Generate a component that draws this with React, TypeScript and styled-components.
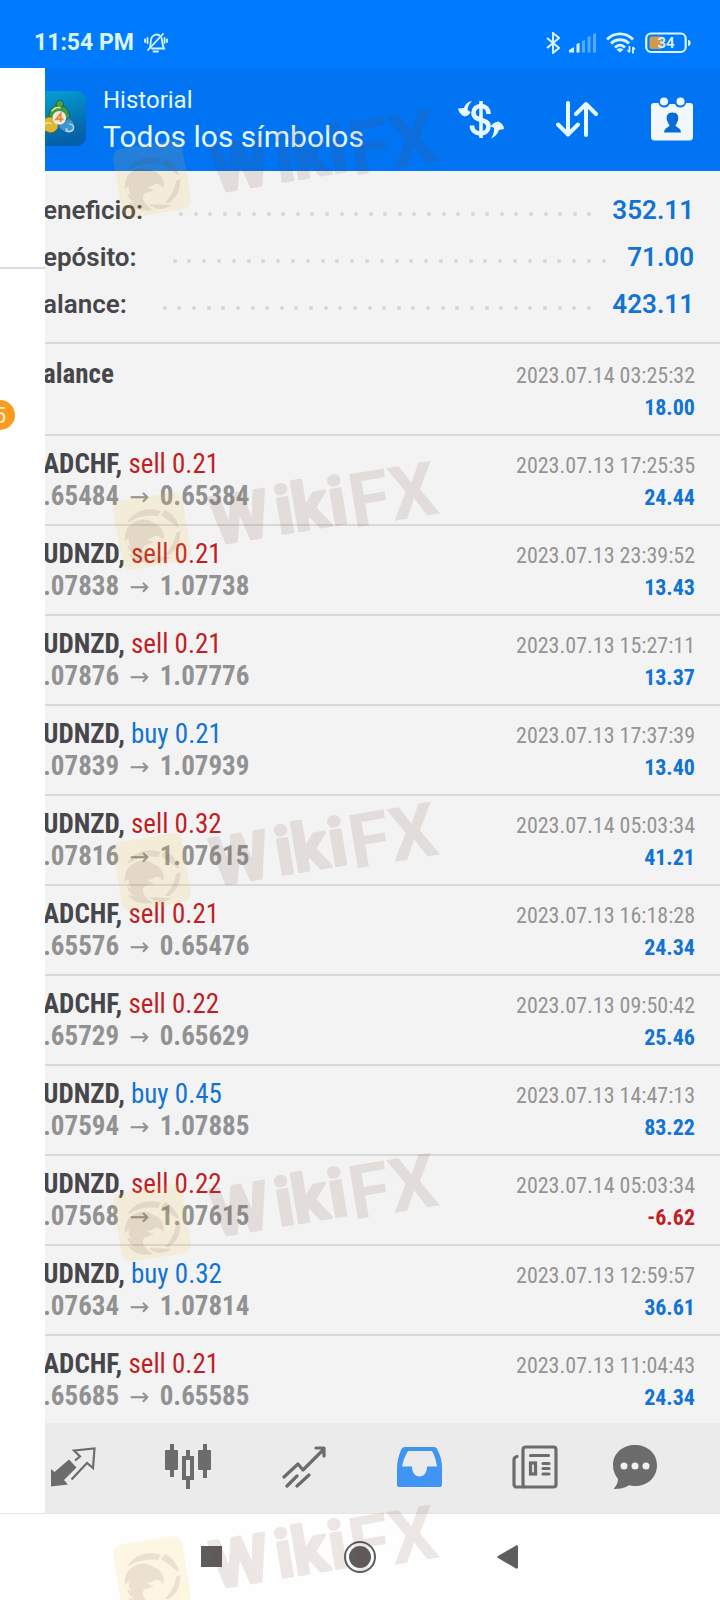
import React from 'react';
import styled, { createGlobalStyle } from 'styled-components';

const BLUE = '#1273d4';
const RED = '#c11e24';
const STATUS_INK = '#d9f5ff';
const TAB_INK = '#6c6c6c';

const GlobalStyle = createGlobalStyle`
  * { box-sizing: border-box; }
  body { margin: 0; background: #fefefe; }
  button { border: 0; padding: 0; background: none; color: inherit; font: inherit; }
  svg { display: block; }
`;

const Screen = styled.div`
  position: relative;
  min-height: 100vh;
  display: flex;
  flex-direction: column;
  overflow: hidden;
  font-family: Roboto, 'Liberation Sans', sans-serif;
`;

const StatusBar = styled.header`
  height: 68px;
  padding: 18px 29px 0 34px;
  display: flex;
  align-items: center;
  justify-content: space-between;
  background: #007bff;
  color: ${STATUS_INK};
`;

const StatusGroup = styled.div<{ $gap: number }>`
  display: flex;
  align-items: center;
  gap: ${(p) => p.$gap}px;
`;

const Clock = styled.time`
  font-size: 23px;
  font-weight: 700;
  line-height: 26px;
`;

const Body = styled.div`
  flex: 1;
  display: flex;
`;

const Drawer = styled.aside`
  width: 45px;
  flex: none;
  z-index: 1;
  overflow: hidden;
  background: #fefefe;
`;

const DrawerProfile = styled.div`
  height: 201px;
  border-bottom: 2px solid #dcdcdc;
`;

const DrawerBadge = styled.span`
  display: flex;
  align-items: center;
  justify-content: flex-end;
  width: 45px;
  height: 30px;
  margin: 131px 0 0 -30px;
  padding-right: 9px;
  border-radius: 15px;
  background: #fb9b1c;
  color: #fff3df;
  font-size: 22px;
`;

const Main = styled.main`
  flex: 1;
  min-width: 0;
  display: flex;
  flex-direction: column;
  background: #f3f3f3;
`;

const AppBar = styled.div`
  height: 103px;
  padding: 0 26px 2px 0;
  display: flex;
  align-items: center;
  background: #0074f3;
  color: #e6f8ff;
`;

const AppLogo = styled.div`
  margin-left: -13px;
`;

const Titles = styled.div`
  flex: 1;
  margin-left: 17px;
`;

const Subtitle = styled.div`
  font-size: 24px;
  line-height: 36px;
`;

const Title = styled.h1`
  margin: 0;
  font-size: 30px;
  font-weight: 400;
  line-height: 38px;
`;

const BarActions = styled.div`
  display: flex;
  align-items: center;
  gap: 52px;
`;

const Summary = styled.dl`
  margin: 0 0 0 -2px;
  padding: 15px 26px 15px 0;
  border-bottom: 2px solid #d8d8d8;
`;

const SummaryRow = styled.div`
  height: 47px;
  display: flex;
  align-items: center;
  font-size: 26px;
  font-weight: 600;
`;

const SummaryLabel = styled.dt`
  color: #47474b;
`;

const SummaryValue = styled.dd`
  margin: 0;
  color: ${BLUE};
`;

const Leader = styled.span`
  flex: 1;
  display: flex;
  justify-content: space-between;
  margin: 8px 21px 0 36px;
`;

const Dot = styled.i`
  width: 4px;
  height: 4px;
  border-radius: 50%;
  background: #d6d6d8;
`;

const Deals = styled.ul`
  flex: 1;
  margin: 0 0 0 -2px;
  padding: 2px 0 0;
  list-style: none;
  font-family: 'Roboto Condensed', 'Liberation Sans Narrow', Roboto, sans-serif;
`;

const Deal = styled.li`
  height: 90px;
  padding: 12px 25px 0 0;
  display: flex;
  justify-content: space-between;
  border-bottom: 2px solid #d8d8d8;

  &:last-child {
    height: 87px;
    border-bottom: 0;
  }
`;

const Line = styled.div`
  font-size: 27px;
  line-height: 32px;
  white-space: nowrap;
`;

const Symbol = styled.strong`
  color: #47474b;
  font-weight: 700;
`;

const Side = styled.span<{ $side: 'buy' | 'sell' }>`
  color: ${(p) => (p.$side === 'buy' ? BLUE : RED)};
`;

const Prices = styled(Line)`
  color: #929292;
  font-weight: 700;
`;

const Arrow = styled.span`
  margin: 0 4px;
  font-family: 'DejaVu Sans', sans-serif;
  font-size: 24px;
  font-weight: 400;
  line-height: 20px;
`;

const Result = styled.div`
  padding-top: 2px;
  text-align: right;
  font-size: 22px;
  line-height: 32px;
`;

const DateText = styled.div`
  color: #949494;
`;

const Amount = styled.div<{ $loss: boolean }>`
  color: ${(p) => (p.$loss ? RED : BLUE)};
  font-weight: 700;
`;

const TabBar = styled.nav`
  height: 90px;
  margin-left: -30px;
  padding: 0 42px 2px 0;
  display: grid;
  grid-template-columns: repeat(5, 1fr) 85px;
  background: #ebebeb;
  color: ${TAB_INK};
`;

const Tab = styled.button<{ $active?: boolean }>`
  display: flex;
  align-items: center;
  justify-content: center;
  color: ${(p) => (p.$active ? '#3f94f4' : 'inherit')};
`;

const SystemNav = styled.footer`
  height: 87px;
  display: flex;
  align-items: center;
  justify-content: center;
  gap: 121px;
  border-top: 1px solid #e6e6e6;
  background: #fefefe;
  color: #5e5d5d;
`;

const Watermarks = styled.div`
  position: absolute;
  inset: 0;
  pointer-events: none;
`;

const Mark = styled.svg<{ $top: number }>`
  position: absolute;
  top: ${(p) => p.$top}px;
  left: 105px;
  overflow: visible;
`;

const MutedBell = () => (
  <svg width="24" height="22" viewBox="0 0 24 22" fill="none" stroke="currentColor" strokeWidth="1.8" strokeLinecap="round">
    <path d="M6 15.500C7 13 6 8 8 5c2-3 5.500-3 7.500-1.500" />
    <path d="M17.500 6c1 3 .5 7 2.500 10.500H8" />
    <path d="M9.500 19.500h4.500M19 2 4 18M3.500 6v5M1 7.500v2.500M20.500 6v5M23 7.500v2.500" />
  </svg>
);

const Bluetooth = () => (
  <svg width="14" height="22" viewBox="0 0 14 22" fill="none" stroke="currentColor" strokeWidth="1.9">
    <path d="M1 6l12 10-6 5V1l6 5L1 16" />
  </svg>
);

const Signal = () => (
  <svg width="28" height="20" viewBox="0 0 28 20" fill="currentColor">
    <path d="M0 19.500V17l5-3v5.500zM7.500 11l3-1v9.500h-3z" />
    <g opacity=".4">
      <path d="M13 8l3-1v12.500h-3zM18.500 4l3-1v16.500h-3zM24 1l3-1v19.500h-3z" />
    </g>
  </svg>
);

const Wifi = () => (
  <svg width="30" height="23" viewBox="0 0 30 23" fill="none" stroke="currentColor" strokeWidth="2.800">
    <path d="M1 7.500C8 0 20 0 27 7.500M5 11.500c5-5 13-5 18 0M9 15.500c3-3 7-3 10 0" />
    <path d="M10.500 17.500c2-1.800 5-1.800 7 0L14 20.500z" fill="currentColor" stroke="none" />
    <path d="M23.500 14v6M27 15v6.500" strokeWidth="1.800" />
    <path d="M21.500 18l2 2.500M29 17.500 27 15" strokeWidth="1.300" />
  </svg>
);

const Battery = () => (
  <svg width="46" height="22" viewBox="0 0 46 22">
    <rect x="1.200" y="1.500" width="39.500" height="18.500" rx="5" fill="none" stroke="currentColor" strokeWidth="2.200" />
    <rect x="4.500" y="4.500" width="13" height="12.500" rx="2" fill="#d39a4c" />
    <path d="M43 8c2 0 2.500 1 2.500 3S45 14 43 14z" fill="currentColor" />
    <text x="21" y="16" textAnchor="middle" fontSize="15" fontWeight="600" fill="currentColor">34</text>
  </svg>
);

const MetaTraderLogo = () => (
  <svg width="54" height="55" viewBox="0 0 54 55" role="img" aria-label="MetaTrader 4">
    <defs>
      <linearGradient id="tile" x1="0" y1="0" x2="0.300" y2="1">
        <stop offset="0" stopColor="#05a3d6" />
        <stop offset="1" stopColor="#0460a8" />
      </linearGradient>
    </defs>
    <rect width="54" height="55" rx="9" fill="url(#tile)" />
    <g transform="translate(2 2) scale(.92)">
      <path d="M16 24c2-8 7-12 12-11 6 0 11 7 11 14l-3 3H18z" fill="#3f9b4b" stroke="#1d5a45" />
      <circle cx="28" cy="12" r="4" fill="#47a548" stroke="#245f3c" />
      <path d="M7 40c-1-9 5-15 12-14l8 10c-3 7-8 9-13 6z" fill="#d9b936" stroke="#61611f" />
      <path d="M26 36l12-9c5 3 8 8 6 13-4 5-13 4-18-4z" fill="#3d95cf" stroke="#1a4e88" />
      <path d="M38 34a4 4 0 1 1-3 4M34 41c3 2 7 1 9-2" fill="none" stroke="#a8dbf1" strokeWidth="1.500" />
      <path d="M10 36c3-4 6-5 9-2M19 20c3-4 6-5 10-4" fill="none" stroke="#f0e58e" strokeWidth="1.500" />
      <circle cx="27.500" cy="27" r="7.500" fill="#f3ead9" />
      <path d="M29 31.500v-9l-5 6h8" fill="none" stroke="#e8853f" strokeWidth="2" />
    </g>
  </svg>
);

const CurrencySync = () => (
  <svg width="46" height="40" viewBox="0 0 46 40" fill="none" stroke="currentColor">
    <path d="M23 2v37" strokeWidth="3.600" />
    <path d="M30.500 15c0-5-3-8-7.500-8-4.500 0-7.500 3-7.500 7 0 9 15 5 15 13 0 4.500-3 7.500-8 7.500s-8.500-3-8.500-8" strokeWidth="4.600" />
    <path d="M14 2C9 3 7 6 6 9L0 9.500C1 14 4 16.500 6.500 17.500c3-.5 5-2 6-4.500l-3-2c0-3 1.500-6 4.500-9z" fill="currentColor" stroke="none" />
    <path d="M33 39.500c4-1.500 7-5 8-8.500l5-1c0-3-2-6-5.500-7.500-4 .5-6.500 2.500-8 5l3.500 1.200c.5 3-.5 7-3 10.800z" fill="currentColor" stroke="none" />
  </svg>
);

const SortArrows = () => (
  <svg width="42" height="36" viewBox="0 0 42 36" fill="none" stroke="currentColor" strokeWidth="4" strokeLinecap="round" strokeLinejoin="round">
    <path d="M12 2v31M2 23.500 12 33.500l10-10M30 34V3M20 13 30 3l10 10" />
  </svg>
);

const CalendarUser = () => (
  <svg width="44" height="44" viewBox="0 0 44 44">
    <path d="M4 6h4.500a5.800 5.800 0 0 0 11 1h5.500a5.800 5.800 0 0 0 11-1H40a3 3 0 0 1 3 3v31a3.500 3.500 0 0 1-3.500 3.500h-35A3.500 3.500 0 0 1 1 40V9a3 3 0 0 1 3-3z" fill="#f1f7fb" />
    <circle cx="14" cy="4.500" r="4" fill="#eef8ff" />
    <circle cx="30.500" cy="4.500" r="4" fill="#eef8ff" />
    <path d="M22.500 15.500c5 0 6.500 3 5.500 8-1 2-1 3-2.500 4.500.5 3 5 2 5.500 7.500H14c.5-5.500 5-4.500 5.500-7.500-1.500-1.500-1.500-2.500-2.500-4.500-1-5 .5-8 5.500-8z" fill="#086cd8" />
  </svg>
);

const QuotesIcon = () => (
  <svg width="46" height="40" viewBox="0 0 46 40">
    <path d="M19 12.500l7.500 8L14 33l4 4.500L1 39.500V22l3.500 3z" fill="currentColor" />
    <path d="M25 13.500l5-4-6-6 20.500-2L43 21l-6-5-15.500 16.500" fill="none" stroke="currentColor" strokeWidth="2.200" />
  </svg>
);

const CandlesIcon = () => (
  <svg width="46" height="46" viewBox="0 0 46 46" fill="currentColor">
    <path d="M5 0h4v6h3a1 1 0 0 1 1 1v18a1 1 0 0 1-1 1H9v7H5v-7H1a1 1 0 0 1-1-1V7a1 1 0 0 1 1-1h4z" />
    <path d="M38 0h4v6h3a1 1 0 0 1 1 1v18a1 1 0 0 1-1 1h-3v8h-4v-8h-4a1 1 0 0 1-1-1V7a1 1 0 0 1 1-1h4z" />
    <path d="M21 6h4v6h4v24h-4v9h-4v-9h-4V12h4zm0 10v16h4V16z" fillRule="evenodd" />
  </svg>
);

const TrendIcon = () => (
  <svg width="44" height="42" viewBox="0 0 44 42" fill="none" stroke="currentColor" strokeWidth="3.200" strokeLinecap="round" strokeLinejoin="round">
    <path d="M2 31l14-13 5 6L41 4M34 2h8v8M5 40l10-10M15 40l12-11" />
  </svg>
);

const InboxIcon = () => (
  <svg width="46" height="42" viewBox="0 0 46 42">
    <path d="M8 1h29c2 0 3 1 4 4 3 6 4 11 4 17v17a2 2 0 0 1-2 2H2a2 2 0 0 1-2-2V22C0 15 2 9 4 4c1-2 2-3 4-3zm3 4C8 10 6 15 5 20.500h10c0 6 3 10 7.500 10s7.500-4 7.500-10h10c-1-5.500-2-10.500-5-15.500z" fill="currentColor" fillRule="evenodd" />
  </svg>
);

const NewsIcon = () => (
  <svg width="46" height="44" viewBox="0 0 46 44" fill="none" stroke="currentColor" strokeWidth="3.200" strokeLinecap="round">
    <rect x="11" y="2" width="33" height="40" rx="2.500" />
    <path d="M12 42H4.500A2.500 2.500 0 0 1 2 39.500V15c0-2 1-3 3-3.500M18.500 10.500h18M31 18.500h6M31 23.500h6M31 29h6" />
    <rect x="18.500" y="18" width="5" height="11" />
  </svg>
);

const ChatIcon = () => (
  <svg width="46" height="46" viewBox="0 0 46 46">
    <path d="M23 1c12 0 22 8 22 20 0 13-10 21-22 21-2 0-5-.5-6-.8-4 2.800-9 3.800-15.500 3.800C5 41 6 38 6 35 3 31 1 27 1 21 1 9 11 1 23 1z" fill="currentColor" />
    <g fill="#f1f1f1">
      <circle cx="12" cy="22" r="3.500" />
      <circle cx="23" cy="22" r="3.500" />
      <circle cx="34" cy="22" r="3.500" />
    </g>
  </svg>
);

const RecentsIcon = () => (
  <svg width="22" height="22" viewBox="0 0 22 22"><path d="M0 0h21v21H0z" fill="currentColor" /></svg>
);

const HomeIcon = () => (
  <svg width="32" height="32" viewBox="0 0 32 32">
    <circle cx="16" cy="16" r="15" fill="none" stroke="currentColor" strokeWidth="2" />
    <circle cx="16" cy="16" r="11" fill="currentColor" />
  </svg>
);

const BackIcon = () => (
  <svg width="22" height="26" viewBox="0 0 22 26"><path d="M1 12 19 1.500c1-.5 2 0 2 1v21c0 1-1 1.500-2 1L1 14c-1-.6-1-1.400 0-2z" fill="currentColor" /></svg>
);

const Watermark = ({ top }: { top: number }) => (
  <Mark $top={top} width="345" height="130" viewBox="0 0 345 130">
    <g transform="rotate(-9.500 47 80)" fontFamily="Roboto, sans-serif" fontWeight="700">
      <rect x="12" y="45" width="70" height="70" rx="9" fill="#f6c83e" opacity=".14" />
      <g fill="#6e4034" stroke="#6e4034" strokeLinecap="round" strokeLinejoin="round" opacity=".12">
        <text x="107 172 189 226" y="104" strokeWidth="3" fontSize="66">Wiki</text>
      </g>
      <text x="246" y="110" fill="#6e4034" opacity=".12" fontSize="75">FX</text>
    </g>
    <g fill="#6e4034" opacity=".11">
      <path d="M22 72C27 62 40 55 56 60l-3 5c-11-2-22 1-31 7z" />
      <path d="M60 59c8 4 13 11 14 18L56 64z" />
      <path d="M75 80c1 12-4 19-11 24h-4c6-7 10-14 11-22z" />
      <path d="M44 105l22 1c-7 5-15 6-22-1z" />
      <path d="M20 90c-1-8 2-15 8-18 5-4 14-5 20 0 5 1 9 5 10 9 1 3 1 6 0 8-2-3-5-5-8-4-2 1-4 3-8 3 2 2 4 2 7 3-6 3-10 2-11 6-1 5 4 10 10 14-11 2-20-1-25-8l6 1c-4-3-6-6-7-10l5 3c-3-3-4-6-3-10-2 1-3 2-4 3z" />
    </g>
  </Mark>
);

const summary = [
  { label: 'eneficio:', value: '352.11', dots: 29 },
  { label: 'epósito:', value: '71.00', dots: 30 },
  { label: 'alance:', value: '423.11', dots: 30 },
];

type DealData = {
  symbol: string;
  side?: 'buy' | 'sell';
  volume?: string;
  from?: string;
  to?: string;
  date: string;
  amount: string;
};

const deals: DealData[] = [
  { symbol: 'alance', date: '2023.07.14 03:25:32', amount: '18.00' },
  { symbol: 'ADCHF,', side: 'sell', volume: '0.21', from: '.65484', to: '0.65384', date: '2023.07.13 17:25:35', amount: '24.44' },
  { symbol: 'UDNZD,', side: 'sell', volume: '0.21', from: '.07838', to: '1.07738', date: '2023.07.13 23:39:52', amount: '13.43' },
  { symbol: 'UDNZD,', side: 'sell', volume: '0.21', from: '.07876', to: '1.07776', date: '2023.07.13 15:27:11', amount: '13.37' },
  { symbol: 'UDNZD,', side: 'buy', volume: '0.21', from: '.07839', to: '1.07939', date: '2023.07.13 17:37:39', amount: '13.40' },
  { symbol: 'UDNZD,', side: 'sell', volume: '0.32', from: '.07816', to: '1.07615', date: '2023.07.14 05:03:34', amount: '41.21' },
  { symbol: 'ADCHF,', side: 'sell', volume: '0.21', from: '.65576', to: '0.65476', date: '2023.07.13 16:18:28', amount: '24.34' },
  { symbol: 'ADCHF,', side: 'sell', volume: '0.22', from: '.65729', to: '0.65629', date: '2023.07.13 09:50:42', amount: '25.46' },
  { symbol: 'UDNZD,', side: 'buy', volume: '0.45', from: '.07594', to: '1.07885', date: '2023.07.13 14:47:13', amount: '83.22' },
  { symbol: 'UDNZD,', side: 'sell', volume: '0.22', from: '.07568', to: '1.07615', date: '2023.07.14 05:03:34', amount: '-6.62' },
  { symbol: 'UDNZD,', side: 'buy', volume: '0.32', from: '.07634', to: '1.07814', date: '2023.07.13 12:59:57', amount: '36.61' },
  { symbol: 'ADCHF,', side: 'sell', volume: '0.21', from: '.65685', to: '0.65585', date: '2023.07.13 11:04:43', amount: '24.34' },
];

const tabs = [
  { name: 'Cotizaciones', icon: <QuotesIcon /> },
  { name: 'Gráficos', icon: <CandlesIcon /> },
  { name: 'Trading', icon: <TrendIcon /> },
  { name: 'Historial', icon: <InboxIcon />, active: true },
  { name: 'Noticias', icon: <NewsIcon /> },
  { name: 'Mensajes', icon: <ChatIcon /> },
];

const markTops = [99, 451, 792, 1143, 1495];

export default function App() {
  return (
    <>
      <GlobalStyle />
      <Screen>
        <StatusBar>
          <StatusGroup $gap={10}>
            <Clock>11:54 PM</Clock>
            <MutedBell />
          </StatusGroup>
          <StatusGroup $gap={9}>
            <Bluetooth />
            <Signal />
            <Wifi />
            <Battery />
          </StatusGroup>
        </StatusBar>

        <Body>
          <Drawer>
            <DrawerProfile />
            <DrawerBadge>5</DrawerBadge>
          </Drawer>
          <Main>
            <AppBar>
              <AppLogo><MetaTraderLogo /></AppLogo>
              <Titles>
                <Subtitle>Historial</Subtitle>
                <Title>Todos los símbolos</Title>
              </Titles>
              <BarActions>
                <button aria-label="Símbolos"><CurrencySync /></button>
                <button aria-label="Ordenar"><SortArrows /></button>
                <button aria-label="Periodo"><CalendarUser /></button>
              </BarActions>
            </AppBar>

            <Summary>
              {summary.map((row) => (
                <SummaryRow key={row.label}>
                  <SummaryLabel>{row.label}</SummaryLabel>
                  <Leader aria-hidden>
                    {Array.from({ length: row.dots }, (_, i) => <Dot key={i} />)}
                  </Leader>
                  <SummaryValue>{row.value}</SummaryValue>
                </SummaryRow>
              ))}
            </Summary>

            <Deals>
              {deals.map((deal, i) => (
                <Deal key={i}>
                  <div>
                    <Line>
                      <Symbol>{deal.symbol}</Symbol>
                      {deal.side && <Side $side={deal.side}> {deal.side} {deal.volume}</Side>}
                    </Line>
                    {deal.from && <Prices>{deal.from} <Arrow>→</Arrow> {deal.to}</Prices>}
                  </div>
                  <Result>
                    <DateText>{deal.date}</DateText>
                    <Amount $loss={deal.amount.startsWith('-')}>{deal.amount}</Amount>
                  </Result>
                </Deal>
              ))}
            </Deals>

            <TabBar>
              {tabs.map((tab) => (
                <Tab key={tab.name} aria-label={tab.name} $active={tab.active}>{tab.icon}</Tab>
              ))}
            </TabBar>
          </Main>
        </Body>

        <SystemNav>
          <button aria-label="Recientes"><RecentsIcon /></button>
          <button aria-label="Inicio"><HomeIcon /></button>
          <button aria-label="Atrás"><BackIcon /></button>
        </SystemNav>

        <Watermarks aria-hidden>
          {markTops.map((top) => <Watermark key={top} top={top} />)}
        </Watermarks>
      </Screen>
    </>
  );
}
